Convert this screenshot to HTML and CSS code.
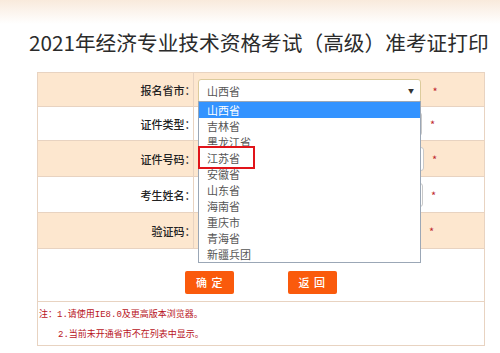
FILE: index.html
```html
<html>
<head>
  <title> 准考证打印 </title>
  <link rel="stylesheet" href="styles.css">
</head>
<body>
  <h1 class="title">2021年经济专业技术资格考试（高级）准考证打印</h1>

  <div class="formWrap">
    <table class="form">
      <tr class="peach">
        <td class="label">报名省市：</td>
        <td class="field">
          <div class="select"><span>山西省</span><span class="arrow">&#9660;</span></div>
          <span class="star">*</span>
        </td>
      </tr>
      <tr>
        <td class="label">证件类型：</td>
        <td class="field"><input type="text" class="box w1"/><span class="star">*</span></td>
      </tr>
      <tr class="peach">
        <td class="label">证件号码：</td>
        <td class="field"><input type="text" class="box w3"/><span class="star">*</span></td>
      </tr>
      <tr>
        <td class="label">考生姓名：</td>
        <td class="field"><input type="text" class="box w2"/><span class="star">*</span></td>
      </tr>
      <tr class="peach">
        <td class="label">验证码：</td>
        <td class="field"><input type="text" class="box w0"/><span class="star">*</span></td>
      </tr>
      <tr>
        <td colspan="2" class="btnRow">
          <span class="btn">确 定</span>
          <span class="btn">返 回</span>
        </td>
      </tr>
      <tr>
        <td colspan="2" class="notes">
          <p>注：1.请使用IE8.0及更高版本浏览器。</p>
          <p class="indent">2.当前未开通省市不在列表中显示。</p>
        </td>
      </tr>
    </table>

    <!-- open list of the province select -->
    <ul class="dropList">
      <li class="on">山西省</li>
      <li>吉林省</li>
      <li>黑龙江省</li>
      <li>江苏省</li>
      <li>安徽省</li>
      <li>山东省</li>
      <li>海南省</li>
      <li>重庆市</li>
      <li>青海省</li>
      <li>新疆兵团</li>
    </ul>
    <div class="mark"></div>
  </div>
</body>
</html>
```

FILE: styles.css
```css
body {
  margin: 0;
  background: linear-gradient(#f9eadc, #ffffff 24px);
  font-family: "Noto Sans CJK SC", sans-serif;
  color: #333;
}

.title {
  margin: 0;
  padding: 27px 0 15px 29px;
  font-size: 20.7px;
  line-height: 30px;
  font-weight: normal;
  color: #2b2b2b;
  white-space: nowrap;
}

.formWrap {
  position: relative;
  margin-left: 37px;
  width: 448px;
}

.form {
  border-collapse: collapse;
  width: 448px;
  border: 1px solid #e2cdbb;
}

.form td {
  border: 1px solid #e8d3c1;
  padding: 0;
}

.form tr { height: 34px; }
.form tr:nth-child(3),
.form tr:nth-child(4),
.form tr:nth-child(5) { height: 36px; }

.peach td { background: #fde7cf; }

.label {
  width: 152px;
  text-align: right;
  padding-right: 3px !important;
  font-size: 11px;
  font-weight: 500;
  color: #222;
  font-feature-settings: "halt";
}

.field {
  padding-left: 4px !important;
  white-space: nowrap;
}

.select {
  display: inline-flex;
  align-items: center;
  justify-content: space-between;
  vertical-align: middle;
  box-sizing: border-box;
  width: 223px;
  height: 24px;
  padding: 0 6px 0 8px;
  border: 1px solid #dccb9c;
  border-radius: 3px;
  background: #fff;
  font-size: 11px;
  color: #555;
}

.arrow {
  font-size: 6px;
  color: #333;
}

.box {
  vertical-align: middle;
  box-sizing: border-box;
  height: 24px;
  border: 1px solid #c9c9c9;
  border-radius: 3px;
  background: #fff;
}
.w0 { width: 223px; }
.w1 { width: 224px; }
.w2 { width: 225px; }
.w3 { width: 226px; }

.star {
  display: inline-block;
  vertical-align: middle;
  margin-left: 8px;
  font-size: 11px;
  color: #c0282e;
}

.btnRow {
  height: 53px;
  padding: 0 !important;
  text-align: center;
  vertical-align: top;
}

.btn {
  display: inline-block;
  width: 49px;
  height: 23px;
  line-height: 23px;
  margin: 22px 25px 0;
  background: #fa5a0c;
  border-radius: 2px;
  color: #fff;
  font-size: 11px;
  font-weight: 500;
  letter-spacing: 1px;
}

.notes {
  height: 42px;
  vertical-align: top;
  padding: 3px 0 0 1px !important;
}

.notes p {
  margin: 0;
  height: 20px;
  line-height: 20px;
  font-family: "Liberation Mono", "Noto Sans CJK SC", monospace;
  font-size: 9px;
  color: #b8141c;
}

.notes .indent { padding-left: 19px; }

.dropList {
  position: absolute;
  left: 161px;
  top: 29px;
  width: 223px;
  box-sizing: border-box;
  margin: 0;
  padding: 0;
  list-style: none;
  background: #fff;
  border: 1px solid #9ba7b6;
}

.dropList li {
  height: 16px;
  line-height: 16px;
  padding-left: 8px;
  font-size: 11px;
  color: #555;
}

.dropList .on {
  background: #3393ff;
  color: #fff;
}

.mark {
  position: absolute;
  left: 161px;
  top: 74px;
  width: 53px;
  height: 19px;
  border: 2px solid #e1141a;
}
```
